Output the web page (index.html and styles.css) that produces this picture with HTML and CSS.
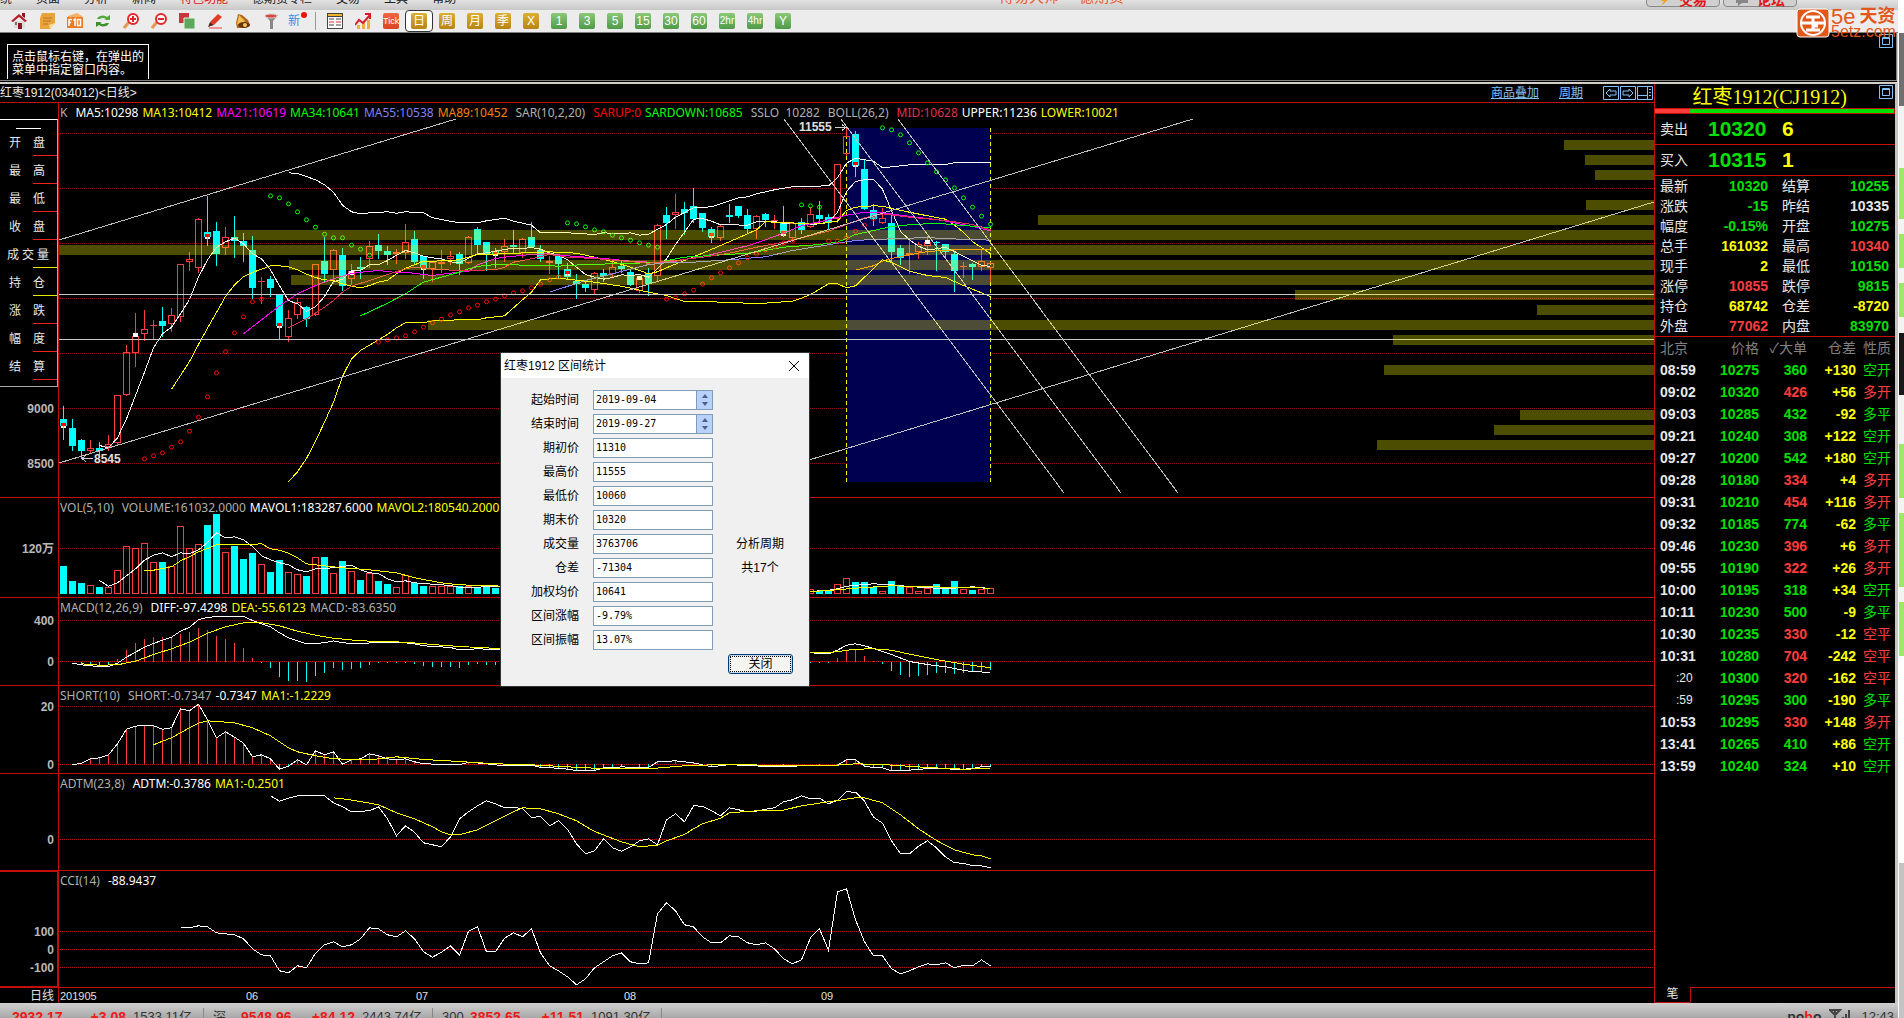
FILE: index.html
```html
<!DOCTYPE html>
<html lang="zh-CN">
<head>
<meta charset="utf-8">
<title>红枣1912 日线</title>
<link rel="stylesheet" href="styles.css">
</head>
<body>
<div class="app">
  <header class="menubar">
    <nav class="menu" aria-label="主菜单">
      <a href="#">统</a><a href="#">页面</a><a href="#">分析</a><a href="#">新闻</a><a href="#" class="hot">特色功能</a><a href="#">德期货专栏</a><a href="#">交易</a><a href="#">工具</a><a href="#">帮助</a>
    </nav>
    <div class="brand-line"><span>博易大师</span><span>德期货</span></div>
    <div class="menu-buttons">
      <button class="pill"><svg width="12" height="12" viewBox="0 0 12 12"><path d="M8 0L2 7h3L2 12 10 5H7L10 0z" fill="#f0a020"/></svg>交易</button>
      <button class="pill"><svg width="14" height="12" viewBox="0 0 14 12"><path d="M1 1h12v8H7l-4 3V9H1z" fill="#888"/></svg>论坛</button>
    </div>
  </header>

  <div class="toolbar" role="toolbar" aria-label="工具栏">
    <button class="tool" aria-label="主页"><svg viewBox="0 0 16 16"><path d="M3 8h11v7H3z" fill="#ddd"/><path d="M0 8L8 1l8 7-2 1-6-5-6 5z" fill="#b51e2c"/><path d="M11 0h3v5l-3-2zM7 10h4v6H7z" fill="#8e1522"/><path d="M4 9h2v3H4z" fill="#777"/></svg></button>
    <button class="tool" aria-label="公告"><svg viewBox="0 0 16 16"><path d="M3 0h13v10l-5 6H1V5z" fill="#e9a53a"/><path d="M4 5h9M4 8h8M4 11h5" stroke="#b9701c"/><path d="M16 10l-5 6-1-4z" fill="#f8dca0"/></svg></button>
    <button class="tool" aria-label="F10"><svg viewBox="0 0 16 16"><path d="M1 3l9-3 5 3v12H1z" fill="#f5b264"/><path d="M0 4h16v11H0z" fill="#ee7b22"/><path d="M2 13V6.500h3M2 9.500h2M6.500 7.500L8 6v7M10.500 6.500h3v6h-3z" fill="none" stroke="#fff" stroke-width="1.500"/></svg></button>
    <button class="tool" aria-label="刷新"><svg viewBox="0 0 16 16"><path d="M2 6a6 5 0 0 1 10-2l3-2v5H9l2-1a4 3 0 0 0-6 0z" fill="#55a83c"/><path d="M14 10a6 5 0 0 1-10 2l-3 2V9h6l-2 1a4 3 0 0 0 6 0z" fill="#3f8f2c"/></svg></button>
    <button class="tool" aria-label="放大"><svg viewBox="0 0 16 16"><path d="M6 9l-5 6" stroke="#e39a55" stroke-width="3"/><circle cx="10" cy="6" r="5" fill="#fff" stroke="#e3262a" stroke-width="2"/><path d="M7 6h6M10 3v6" stroke="#e3262a" stroke-width="2"/></svg></button>
    <button class="tool" aria-label="缩小"><svg viewBox="0 0 16 16"><path d="M6 9l-5 6" stroke="#e39a55" stroke-width="3"/><circle cx="10" cy="6" r="5" fill="#fff" stroke="#e3262a" stroke-width="2"/><path d="M7 6h6" stroke="#e3262a" stroke-width="2"/></svg></button>
    <button class="tool" aria-label="窗口"><svg viewBox="0 0 16 16"><path d="M0 0h10v10H0z" fill="#c8373c"/><path d="M5 5h11v11H5z" fill="#5fa75c" stroke="#e6f2e4"/></svg></button>
    <button class="tool" aria-label="画线"><svg viewBox="0 0 16 16"><path d="M3 9l8-8 4 3-8 8z" fill="#e23c28"/><path d="M3 9l4 3-6 2z" fill="#502820"/><path d="M2 15h13" stroke="#f04040"/></svg></button>
    <button class="tool" aria-label="预警"><svg viewBox="0 0 16 16"><path d="M3 1l4 1 6 5 2 5-5 3-8 0-1-5z" fill="#b46a1b"/><path d="M4 2l6 6-6 5-2-2z" fill="#efc053"/><ellipse cx="9" cy="12" rx="6" ry="3" fill="#6a3410"/><circle cx="10" cy="12" r="2" fill="#f0c860"/></svg></button>
    <button class="tool narrow" aria-label="筛选"><svg viewBox="0 0 16 16"><path d="M2 2h13l-5 6v8H7V8z" fill="#888"/><ellipse cx="8" cy="3" rx="6" ry="2" fill="#e04438" stroke="#ccc"/></svg></button>
    <button class="tool new-tag" aria-label="新"><span>新</span><i></i></button>
    <span class="divider"></span>
    <button class="tool" aria-label="报价"><svg viewBox="0 0 16 16"><path d="M0 0h16v16H0z" fill="#444"/><path d="M1 4h14v11H1z" fill="#fff"/><path d="M1 1h14v2H1z" fill="#f0b428"/><path d="M2 6h5M9 6h5M2 12h5M9 12h5" stroke="#444"/><path d="M2 9h5M9 9h5" stroke="#e02828"/></svg></button>
    <button class="tool" aria-label="走势"><svg viewBox="0 0 16 16"><path d="M2 12h3v4H2zM7 9h3v7H7zM12 7h3v9h-3z" fill="#f0b040"/><path d="M0 12l4-5 4 3 7-8M10 1h5v5" fill="none" stroke="#d81c28" stroke-width="2"/></svg></button>
    <button class="tool"><span class="chip tick">Tick</span></button>
    <button class="tool active"><span class="chip gold">日</span></button>
    <button class="tool"><span class="chip gold">周</span></button>
    <button class="tool"><span class="chip gold">月</span></button>
    <button class="tool"><span class="chip gold">季</span></button>
    <button class="tool"><span class="chip gold">X</span></button>
    <button class="tool"><span class="chip green">1</span></button>
    <button class="tool"><span class="chip green">3</span></button>
    <button class="tool"><span class="chip green">5</span></button>
    <button class="tool"><span class="chip green">15</span></button>
    <button class="tool"><span class="chip green">30</span></button>
    <button class="tool"><span class="chip green">60</span></button>
    <button class="tool"><span class="chip green small">2hr</span></button>
    <button class="tool"><span class="chip green small">4hr</span></button>
    <button class="tool"><span class="chip green">Y</span></button>
  </div>

  <div class="logo">
    <svg width="34" height="30" viewBox="0 0 34 30"><rect x="1" y="1" width="32" height="28" rx="3" fill="#e3571b" stroke="#fff"/><circle cx="17" cy="15" r="12" fill="none" stroke="#fff" stroke-width="2"/><path d="M10 9h14M6 15h22M17 9v13M17 18h5M10 22h14" stroke="#fff" stroke-width="3" fill="none"/></svg>
    <div class="logo-text"><span class="logo-name"><b>5e</b>天资</span><span class="logo-url">5etz.com</span></div>
  </div>

  <section class="hint-pane">
    <p class="hint">点击鼠标右键，在弹出的<br>菜单中指定窗口内容。</p>
    <button class="winbox" aria-label="最大化"><svg width="14" height="14"><path d="M.5.5h13v13H.5zM3.500 3.500h7v7h-7zM3 4.500h8" fill="none" stroke="#80c0ff"/></svg></button>
  </section>

  <main class="workspace">
    <section class="charts">
      <div class="chart-title">
        <h1>红枣1912(034012)&lt;日线&gt;</h1>
        <a href="#">商品叠加</a>
        <a href="#">周期</a>
        <div class="chart-nav">
          <button aria-label="向左"><svg width="16" height="14"><path d="M.5.5h15v13H.5zM3 7l4-4v2h6v4H7v2z" fill="none" stroke="#80c0ff"/></svg></button>
          <button aria-label="向右"><svg width="16" height="14"><path d="M.5.5h15v13H.5zM13 7L9 3v2H3v4h6v2z" fill="none" stroke="#80c0ff"/></svg></button>
          <button aria-label="面板"><svg width="16" height="14"><path d="M.5.5h15v13H.5zM10.500 1v12M1 9.500h9M12 3.500h2M12 6.500h2M12 9.500h2" fill="none" stroke="#80c0ff"/></svg></button>
        </div>
      </div>

      <div class="pane pane-main">
        <svg class="plot" id="k"></svg>
        <div class="legend"><span class="g wide">K</span><span class="w">MA5:10298</span><span class="y">MA13:10412</span><span class="m">MA21:10619</span><span class="gr">MA34:10641</span><span class="b">MA55:10538</span><span class="o wide">MA89:10452</span><span class="g wide">SAR(10,2,20)</span><span class="r">SARUP:0</span><span class="gr wide">SARDOWN:10685</span><span class="g wide">SSLO&nbsp; 10282</span><span class="g wide">BOLL(26,2)</span><span class="c">MID:10628</span><span class="w">UPPER:11236</span><span class="y">LOWER:10021</span></div>
        <ul class="fields">
          <li class="first"><i></i></li>
          <li><span>开</span><span>盘</span></li>
          <li><span>最</span><span>高</span></li>
          <li><span>最</span><span>低</span></li>
          <li><span>收</span><span>盘</span></li>
          <li class="yl three"><span>成</span><span>交</span><span>量</span></li>
          <li class="yl"><span>持</span><span>仓</span></li>
          <li><span>涨</span><span>跌</span></li>
          <li><span>幅</span><span>度</span></li>
          <li><span>结</span><span>算</span></li>
        </ul>
      </div>
      <div class="pane pane-vol"><svg class="plot" id="vol"></svg>
        <div class="legend"><span class="g wide">VOL(5,10)</span><span class="g">VOLUME:161032.0000</span><span class="w">MAVOL1:183287.6000</span><span class="y">MAVOL2:180540.2000</span></div></div>
      <div class="pane pane-macd"><svg class="plot" id="macd"></svg>
        <div class="legend"><span class="g wide">MACD(12,26,9)</span><span class="w">DIFF:-97.4298</span><span class="y">DEA:-55.6123</span><span class="g">MACD:-83.6350</span></div></div>
      <div class="pane pane-macd"><svg class="plot" id="short"></svg>
        <div class="legend"><span class="g wide">SHORT(10)</span><span class="g">SHORT:-0.7347</span><span class="w">-0.7347</span><span class="y">MA1:-1.2229</span></div></div>
      <div class="pane pane-adtm"><svg class="plot" id="adtm"></svg>
        <div class="legend"><span class="g wide">ADTM(23,8)</span><span class="w">ADTM:-0.3786</span><span class="y">MA1:-0.2501</span></div></div>
      <div class="pane pane-cci"><svg class="plot" id="cci"></svg><div class="axis-box"></div>
        <div class="legend"><span class="g wide">CCI(14)</span><span class="w">-88.9437</span></div></div>
      <div class="pane pane-time"><svg class="plot" id="time"></svg></div>
    </section>

    <aside class="quotes">
      <div class="q-title"><h2>红枣1912(CJ1912)</h2><button class="winbox" aria-label="最大化"><svg width="14" height="14"><path d="M.5.5h13v13H.5zM3.500 3.500h7v7h-7zM3 4.500h8" fill="none" stroke="#80c0ff"/></svg></button></div>
      <div class="ratio"><i></i></div>
      <div class="deal"><span>卖出</span><b>10320</b><em>6</em></div>
      <div class="deal"><span>买入</span><b>10315</b><em>1</em></div>
      <table class="stats">
        <tr><th>最新</th><td class="up">10320</td><th>结算</th><td class="up">10255</td></tr>
        <tr><th>涨跌</th><td class="up">-15</td><th>昨结</th><td class="wh">10335</td></tr>
        <tr><th>幅度</th><td class="up">-0.15%</td><th>开盘</th><td class="up">10275</td></tr>
        <tr><th>总手</th><td class="ye">161032</td><th>最高</th><td class="dn">10340</td></tr>
        <tr><th>现手</th><td class="ye">2</td><th>最低</th><td class="up">10150</td></tr>
        <tr><th>涨停</th><td class="dn">10855</td><th>跌停</th><td class="up">9815</td></tr>
        <tr><th>持仓</th><td class="ye">68742</td><th>仓差</th><td class="ye">-8720</td></tr>
        <tr><th>外盘</th><td class="dn">77062</td><th>内盘</th><td class="up">83970</td></tr>
      </table>
      <table class="tape">
        <thead><tr><th>北京</th><th>价格</th><th>✓大单</th><th>仓差</th><th>性质</th></tr></thead>
        <tbody>
        <tr><td>08:59</td><td>10275</td><td class="up">360</td><td>+130</td><td class="up">空开</td></tr>
        <tr><td>09:02</td><td>10320</td><td class="dn">426</td><td>+56</td><td class="dn">多开</td></tr>
        <tr><td>09:03</td><td>10285</td><td class="up">432</td><td>-92</td><td class="up">多平</td></tr>
        <tr><td>09:21</td><td>10240</td><td class="up">308</td><td>+122</td><td class="up">空开</td></tr>
        <tr><td>09:27</td><td>10200</td><td class="up">542</td><td>+180</td><td class="up">空开</td></tr>
        <tr><td>09:28</td><td>10180</td><td class="dn">334</td><td>+4</td><td class="dn">多开</td></tr>
        <tr><td>09:31</td><td>10210</td><td class="dn">454</td><td>+116</td><td class="dn">多开</td></tr>
        <tr><td>09:32</td><td>10185</td><td class="up">774</td><td>-62</td><td class="up">多平</td></tr>
        <tr><td>09:46</td><td>10230</td><td class="dn">396</td><td>+6</td><td class="dn">多开</td></tr>
        <tr><td>09:55</td><td>10190</td><td class="dn">322</td><td>+26</td><td class="dn">多开</td></tr>
        <tr><td>10:00</td><td>10195</td><td class="up">318</td><td>+34</td><td class="up">空开</td></tr>
        <tr><td>10:11</td><td>10230</td><td class="up">500</td><td>-9</td><td class="up">多平</td></tr>
        <tr><td>10:30</td><td>10235</td><td class="dn">330</td><td>-12</td><td class="dn">空平</td></tr>
        <tr><td>10:31</td><td>10280</td><td class="dn">704</td><td>-242</td><td class="dn">空平</td></tr>
        <tr><td class="sec">:20</td><td>10300</td><td class="dn">320</td><td>-162</td><td class="dn">空平</td></tr>
        <tr><td class="sec">:59</td><td>10295</td><td class="up">300</td><td>-190</td><td class="up">多平</td></tr>
        <tr><td>10:53</td><td>10295</td><td class="dn">330</td><td>+148</td><td class="dn">多开</td></tr>
        <tr><td>13:41</td><td>10265</td><td class="up">410</td><td>+86</td><td class="up">空开</td></tr>
        <tr><td>13:59</td><td>10240</td><td class="up">324</td><td>+10</td><td class="up">空开</td></tr>
        </tbody>
      </table>
      <div class="tabs"><button>笔</button><span></span></div>
    </aside>
  </main>

  <footer class="status">
    <span class="index"><b>2932.17</b><b>+3.08</b></span><span class="amt">1533.11亿</span>
    <span class="nm">深</span><span class="index"><b>9548.96</b><b>+84.12</b></span><span class="amt">2443.74亿</span>
    <span class="nm">300</span><span class="index"><b>3852.65</b><b>+11.51</b></span><span class="amt">1091.30亿</span>
    <span class="pobo">po<i>b</i>o</span>
    <svg width="22" height="14" viewBox="0 0 22 14"><path d="M1 1h10L6 6zM6 1v13M14 14V8M17 14V5M20 14V1" fill="none" stroke="#444" stroke-width="2"/></svg>
    <time>12:43</time>
  </footer>

  <form class="dialog" role="dialog" aria-labelledby="dlg-title">
    <div class="dlg-head"><h2 id="dlg-title">红枣1912 区间统计</h2><button type="button" aria-label="关闭窗口"><svg width="12" height="12"><path d="M1 1l10 10M11 1L1 11" stroke="#000" fill="none"/></svg></button></div>
    <div class="dlg-body">
      <div class="row"><label for="f1">起始时间</label><div class="spin"><input id="f1" value="2019-09-04"><span><button type="button" aria-label="增加"></button><button type="button" class="down" aria-label="减少"></button></span></div></div>
      <div class="row"><label for="f2">结束时间</label><div class="spin"><input id="f2" value="2019-09-27"><span><button type="button" aria-label="增加"></button><button type="button" class="down" aria-label="减少"></button></span></div></div>
      <div class="row"><label for="f3">期初价</label><input id="f3" value="11310"></div>
      <div class="row"><label for="f4">最高价</label><input id="f4" value="11555"></div>
      <div class="row"><label for="f5">最低价</label><input id="f5" value="10060"></div>
      <div class="row"><label for="f6">期末价</label><input id="f6" value="10320"></div>
      <div class="row"><label for="f7">成交量</label><input id="f7" value="3763706"><span class="side">分析周期</span></div>
      <div class="row"><label for="f8">仓差</label><input id="f8" value="-71304"><span class="side">共17个</span></div>
      <div class="row"><label for="f9">加权均价</label><input id="f9" value="10641"></div>
      <div class="row"><label for="f10">区间涨幅</label><input id="f10" value="-9.79%"></div>
      <div class="row"><label for="f11">区间振幅</label><input id="f11" value="13.07%"></div>
      <button type="button" class="ok"><span>关闭</span></button>
    </div>
  </form>
</div>
<div class="edge"></div>
<script src="chart.js"></script>
</body>
</html>
```
FILE: styles.css
```css
* { box-sizing: border-box; }
body {
  margin: 0;
  display: flex;
  min-height: 100vh;
  background: #000;
  color: #e8e8e8;
  font: 12px/16px "Liberation Sans", "Noto Sans CJK SC", sans-serif;
  overflow: hidden;
}
h1, h2, p, ul { margin: 0; padding: 0; font-weight: normal; list-style: none; }
i, em { font-style: normal; }
button { margin: 0; padding: 0; border: 0; background: none; font: inherit; color: inherit; }
svg { display: block; }
.app { position: relative; flex: 1; min-width: 0; display: flex; flex-direction: column; border-right: 1px solid #fff; }

/* menu */
.menubar { display: flex; height: 10px; overflow: hidden; background: linear-gradient(#e2e2e2, #c8c8c8); }
.menu { display: flex; gap: 24px; width: 999px; margin-top: -8px; }
.menu a { color: #222; text-decoration: none; line-height: 14px; white-space: nowrap; height: 14px; }
.menu a.hot { color: #e81010; }
.brand-line { display: flex; gap: 20px; flex: 1; margin-top: -12px; color: #f05a28; font-size: 15px; line-height: 18px; }
.menu-buttons { display: flex; gap: 3px; margin-right: 101px; }
.pill {
  display: flex; align-items: center; justify-content: center; gap: 8px;
  width: 74px; height: 24px; margin-top: -17px; padding-top: 9px;
  border: 1px solid #888; border-radius: 4px; background: #d0d0d0;
  color: #e01818; font-weight: bold; font-size: 14px;
}

/* toolbar */
.toolbar { display: flex; align-items: center; height: 23px; padding-left: 5px; background: #ececec; border-bottom: 1px solid #808080; }
.tool { width: 28px; height: 22px; display: grid; place-items: center; }
.tool.narrow { width: 27px; }
.tool svg { width: 16px; height: 16px; }
.tool.active { background: #fff; border: 1px solid #333; border-radius: 4px; }
.divider { width: 1px; height: 18px; background: #999; margin: 0 5px 0 3px; }
.chip { width: 16px; height: 16px; border-radius: 2px; color: #fff; font-size: 12px; line-height: 16px; text-align: center; overflow: hidden; }
.chip.gold { background: linear-gradient(#dcb030, #b88414); }
.chip.green { background: linear-gradient(#8cc878, #4e9a48); }
.chip.tick { background: linear-gradient(#f06840, #dc4420); font-size: 9px; }
.chip.small { font-size: 10px; }
.new-tag { grid-auto-flow: column; color: #3c8ce0; }
.new-tag i { width: 6px; height: 6px; border-radius: 3px; background: #f01010; align-self: start; margin: 2px 0 0 -8px; }

.logo { position: absolute; top: 8px; right: 0; display: flex; color: #e3571b; }
.logo-text { display: flex; flex-direction: column; width: 68px; padding-left: 1px; white-space: nowrap; }
.logo-name { display: flex; gap: 4px; font-size: 18px; font-weight: bold; line-height: 17px; }
.logo-name b { font: 22px/17px "Liberation Sans", sans-serif; }
.logo-url { font-size: 16px; line-height: 13px; }

/* hint */
.hint-pane { display: flex; justify-content: space-between; align-items: flex-start; height: 51px; padding: 0 4px 0 7px; border-bottom: 2px solid #d4d0c8; border-right: 1px solid #d4d0c8; box-shadow: inset 0 -1px #000, inset -1px -2px #808080; }
.hint { margin-top: 11px; width: 142px; height: 35px; padding: 6px 4px 0; border: 1px solid #fff; border-bottom: 0; line-height: 13px; color: #fff; white-space: nowrap; overflow: hidden; }
.winbox { padding-top: 1px; }

/* workspace */
.workspace { display: flex; flex: 1; border-right: 3px solid #c8c4c0; }
.charts { flex: 1; min-width: 0; }
.chart-title { display: flex; align-items: center; height: 19px; padding-right: 1px; border-bottom: 1px solid #c01008; }
.chart-title h1 { flex: 1; font-size: 12px; white-space: nowrap; }
.chart-title a { color: #80c0ff; margin-right: 20px; }
.chart-nav { display: flex; gap: 1px; }

.pane { display: grid; grid-template-columns: 59px minmax(0, 1fr); border-bottom: 1px solid #c01008; }
.pane > * { grid-row: 1; }
.pane-main { height: 395px; }
.pane-vol { height: 100px; }
.pane-macd { height: 88px; }
.pane-adtm { height: 97px; }
.pane-cci { height: 117px; }
.pane-time { height: 15px; border-bottom: 0; }
.plot { grid-column: 1 / 3; width: 100%; height: 100%; shape-rendering: crispEdges; }
.plot text { font: 12px "Liberation Sans", "Noto Sans CJK SC", sans-serif; fill: #e0e0e0; }
.plot text.time { font-size: 11px; }
.plot text.axis { font-weight: bold; text-anchor: end; fill: #b8b8b8; }
.plot text.mark { font-weight: bold; }
.plot .line { fill: none; stroke-width: 1; }
.legend { grid-column: 2; display: flex; gap: 4px; height: 20px; padding-left: 1px; font: 12px/20px "Noto Sans", sans-serif; white-space: nowrap; overflow: hidden; }
.legend .wide { margin-right: 4px; }
.g { color: #b0b0b0; } .w { color: #fff; } .y { color: #ff0; } .m { color: #f0f; }
.gr { color: #0f0; } .b { color: #8080ff; } .o { color: #ff8000; } .r { color: #f00; } .c { color: #e03050; }
.axis-box { grid-column: 1; border: 1px solid #c01008; border-left: 0; border-right-width: 2px; }

.fields { grid-column: 1; align-self: start; width: 58px; margin-top: 16px; padding-bottom: 5px; border: 1px solid #fff; border-left: 0; border-color: #fff #aaa #aaa; background: #000; }
.fields li { position: relative; display: flex; justify-content: space-between; align-items: center; height: 28px; padding: 0 12px 0 9px; line-height: 28px; }
.fields li.three { padding: 0 8px 0 7px; }
.fields li.first { height: 9px; padding: 0 16px; }
.fields li.first i { flex: 1; height: 1px; background: #fff; margin-top: 8px; }
.fields li::after { content: ""; position: absolute; right: 0; bottom: 1px; width: 24px; height: 1px; background: #f02020; }
.fields li.yl::after { background: #e8e800; }
.fields li.first::after { content: none; }

/* quotes */
.quotes { width: 241px; display: flex; flex-direction: column; border-left: 1px solid #c01008; }
.q-title { display: flex; justify-content: flex-end; gap: 32px; height: 24px; padding-right: 2px; }
.q-title h2 { font: 20px/26px "Liberation Serif", "Noto Sans CJK SC", serif; color: #ff0; }
.q-title .winbox { align-self: flex-start; }
.ratio { height: 6px; border: 1px solid #c01008; border-left: 0; background: #00e000; }
.ratio i { display: block; width: 35px; height: 4px; background: #ff3c3c; }
.deal { display: flex; align-items: center; height: 31px; padding-left: 5px; border-bottom: 1px solid #c01008; font-size: 14px; }
.deal span { width: 48px; }
.deal b { width: 74px; font-size: 21px; color: #00e000; }
.deal em { font-size: 21px; font-weight: bold; color: #ff0; }
table { width: 100%; border-collapse: separate; border-spacing: 0; table-layout: fixed; font-size: 14px; line-height: 18px; }
th, td { padding: 0; white-space: nowrap; }
th { font-weight: normal; text-align: left; }
td { font-weight: bold; text-align: right; }
.up { color: #00e000; } .dn { color: #ff3c3c; } .ye { color: #ff0; } .wh { color: #e8e8e8; }
.stats { padding: 0 6px 0 5px; border-bottom: 1px solid #c01008; }
.stats tr { height: 20px; }
.stats th { width: 42px; }
.stats th:nth-child(3) { width: 54px; padding-left: 14px; }
.stats td:nth-child(2) { width: 66px; }
.tape { padding: 0 4px 0 5px; }
.tape tr { height: 22px; }
.tape thead th { color: #808080; text-align: right; }
.tape thead th:nth-child(1) { width: 38px; text-align: left; }
.tape th:nth-child(2) { width: 61px; }
.tape th:nth-child(3) { width: 48px; }
.tape th:nth-child(4) { width: 49px; }
.tape td:nth-child(1) { text-align: left; }
.tape td:nth-child(2) { color: #00e000; }
.tape td:nth-child(4) { color: #ff0; }
.tape td:nth-child(5) { font-weight: normal; }
.tape td.sec { font-weight: normal; font-size: 12px; padding-left: 16px; }
.tabs { display: flex; margin-top: auto; height: 16px; margin-left: -1px; }
.tabs button { width: 37px; border: 1px solid #c01008; border-top: 0; border-radius: 0 0 2px 2px; line-height: 15px; }
.tabs span { flex: 1; border-top: 1px solid #c01008; }

/* status bar */
.status { display: flex; height: 15px; padding: 5px 4px 0 12px; overflow: hidden; background: linear-gradient(#d0d0d0, #a8a8a8); color: #333; font-size: 13px; line-height: 18px; white-space: nowrap; }
.index { display: flex; justify-content: space-between; width: 121px; padding-right: 7px; color: #f01818; font-size: 14px; }
.amt { width: 71px; height: 16px; border-right: 1px solid #888; }
.nm { width: 37px; padding-left: 9px; }
.status svg { margin-top: 1px; }
.pobo { margin-left: auto; margin-right: 8px; font-size: 14px; font-weight: bold; }
.pobo i { color: #f01818; }
.status time { margin-left: 10px; }

/* dialog */
.dialog { position: absolute; left: 501px; top: 353px; width: 308px; background: #f0f0f0; color: #000; outline: 1px solid #333; }
.dlg-head { display: flex; justify-content: space-between; align-items: center; height: 25px; padding: 0 9px 0 3px; background: #fff; }
.dlg-head h2 { font-size: 12px; line-height: 16px; }
.dlg-body { display: flex; flex-direction: column; gap: 4px; padding: 12px 16px 12px 0; }
.row { display: flex; align-items: center; height: 20px; }
.row label { width: 78px; margin-right: 14px; text-align: right; }
.dialog input { width: 120px; height: 20px; padding: 0 2px 2px; border: 1px solid #7f9db9; background: #fff; color: #000; font: 10px "DejaVu Sans Mono", monospace; }
.spin { display: flex; width: 120px; height: 20px; border: 1px solid #7f9db9; }
.dialog .spin input { flex: 1; width: 0; height: 18px; border: 0; }
.spin span { width: 16px; border-left: 1px solid #7f9db9; background: #b8d0fc; display: flex; flex-direction: column; align-items: center; justify-content: center; gap: 4px; }
.spin button { width: 0; height: 4px; border: 3px solid transparent; border-top: 0; border-bottom: 4px solid #4d6185; }
.spin button.down { border-bottom: 0; border-top: 4px solid #4d6185; }
.side { flex: 1; text-align: center; padding-left: 14px; }
.ok { align-self: flex-end; width: 65px; height: 20px; border: 1px solid #003c74; border-radius: 3px; background: #f4f4f0; box-shadow: inset 0 0 0 1px #c4d8f4; padding: 1px; }
.ok span { display: block; height: 16px; border: 1px dotted #000; line-height: 14px; }

/* strip of the neighbouring window */
.edge {
  width: 5px;
  background: linear-gradient(#fff 0 33px, #707070 33px 106px, #f4f4f4 106px 168px, #9ee868 168px 219px, #f4f4f4 219px 234px, #9ee868 234px 268px, #f4f4f4 268px 283px, #9ee868 283px 317px, #f4f4f4 317px 333px, #181818 333px 395px, #f4f4f4 395px 444px, #9ee868 444px 498px, #f4f4f4 498px 513px, #9ee868 513px 587px, #f4f4f4 587px 602px, #9ee868 602px 656px, #fff 656px 863px, #c4c4c4 863px);
}
```
FILE: chart.js
```js
// Candles sit 9px apart. Vertical readings are kept in thirds of a pixel.
const STEP = 9, X0 = 63;
const NS = 'http://www.w3.org/2000/svg';
const CYAN = '#00ffff', RED = '#ff3c3c';

function add(parent, tag, attrs, text) {
  const node = document.createElementNS(NS, tag);
  for (const key in attrs) node.setAttribute(key, attrs[key]);
  if (text) node.textContent = text;
  parent.appendChild(node);
  return node;
}
const x = i => X0 + i * STEP;

// offset: distance in px from the top of the pane to reading 0
function pane(id, offset) {
  const svg = document.getElementById(id);
  const y = v => Math.round(offset + v / 3);
  add(svg, 'rect', { x: 58, y: 0, width: 1, height: '100%', fill: '#c01008' });
  return {
    svg, y,
    grid(v, label, color) {
      const row = Math.floor(offset + v / 3);
      add(svg, 'line', { x1: 60, x2: '100%', y1: row + .5, y2: row + .5, stroke: color || '#a00000', 'stroke-dasharray': '1 1' });
      if (label) add(svg, 'text', { x: 54, y: row + 5, class: 'axis' }, label);
    },
    line(color, points) {
      const pts = points.split(' ').map(p => p.split(',')).map(([i, v]) => x(+i) + .5 + ',' + (offset + v / 3 + .5).toFixed(1));
      add(svg, 'polyline', { points: pts.join(' '), class: 'line', stroke: color });
    },
    segment(x1, y1, x2, y2, color, dash) {
      const a = { x1, y1, x2, y2, stroke: color || '#c0c0c0' };
      if (dash) a['stroke-dasharray'] = dash;
      add(svg, 'line', a);
    },
    body(i, top, bottom, up) {
      const t = y(top), h = Math.max(y(bottom) - t, 1);
      if (up && h > 1) add(svg, 'rect', { x: x(i) - 2.5, y: t + .5, width: 6, height: h - 1, fill: '#000', 'fill-opacity': 0, stroke: RED });
      else add(svg, 'rect', { x: x(i) - 3, y: t, width: 7, height: h, fill: up ? RED : CYAN });
    },
    stick(i, from, to, color) {
      const a = y(Math.min(from, to)), b = y(Math.max(from, to));
      add(svg, 'rect', { x: x(i), y: a, width: 1, height: Math.max(b - a, 1), fill: color });
    }
  };
}

// high, low, body top, body bottom, r = rising / c = falling
const candles = `918 1020 957 978 c|957 1053 984 1038 c|1018 1075 1020 1053 c|1020 1062 1044 1053 r|1026 1065 1044 1054 c|1005 1052 1032 1042 r|885 1038 885 1029 r|735 885 757 884 r|639 800 708 758 r|630 722 688 702 r|660 717 675 677 r|621 711 663 678 c|624 695 645 672 r|492 665 492 650 r|456 513 478 486 r|354 520 357 503 r|287 438 396 411 c|366 498 393 462 c|381 465 412 444 r|348 474 411 423 c|399 486 423 438 c|408 596 450 563 c|531 612 544 547 r|528 590 538 563 c|585 717 585 678 c|630 725 655 710 r|595 658 606 644 r|618 681 621 657 c|492 644 492 644 r|412 550 483 522 c|447 551 451 509 r|444 573 465 558 c|492 556 513 536 r|471 536 501 506 c|423 503 438 476 r|402 476 435 453 c|438 494 453 465 c|447 491 457 461 r|372 476 427 458 r|393 494 417 486 c|468 536 468 503 c|482 545 485 506 r|450 518 486 493 r|453 494 468 476 r|456 525 462 492 c|408 488 412 488 r|381 460 387 434 c|426 512 426 463 c|443 503 452 462 c|417 486 437 455 r|390 458 436 441 c|414 474 418 458 r|366 440 411 440 c|436 485 450 477 c|468 523 482 488 r|466 535 466 492 c|489 538 507 530 c|522 596 543 551 c|545 575 552 564 c|515 585 520 569 r|508 545 520 527 c|483 530 502 521 r|483 518 498 507 c|508 557 516 555 c|528 580 535 574 r|504 587 520 553 c|373 545 376 529 r|321 417 345 369 c|282 387 337 346 r|306 404 327 339 c|264 370 318 356 c|339 396 339 384 c|381 428 387 410 c|375 422 379 413 r|312 368 345 350 c|318 354 318 348 c|328 398 345 387 c|345 416 349 386 r|339 380 342 360 c|346 386 360 363 r|318 410 366 400 c|366 425 370 413 r|353 402 366 389 c|321 382 343 380 r|303 370 345 357 c|342 389 351 370 c|192 368 192 358 r|85 168 109 163 r|93 230 102 197 c|180 327 207 327 c|312 378 330 357 c|324 368 354 368 r|340 486 370 455 c|435 494 444 473 c|420 521 458 465 r|426 478 433 455 r|408 464 427 439 r|423 513 427 430 c|432 473 432 456 c|456 575 462 513 c|486 533 498 502 r|489 539 492 501 c|450 513 484 502 r|486 545 490 505 r`
  .split('|').map(row => row.split(' ')).map(([h, l, t, b, k]) => ({ h: +h, l: +l, t: +t, b: +b, up: k === 'r' }));

const k = pane('k', -3);
[100, 265, 430, 595, 760].forEach(v => k.grid(v));
k.grid(925, '9000');
k.grid(1090, '8500');
add(k.svg, 'rect', { x: 847, y: 25, width: 144, height: 354, fill: '#000050' });
k.segment(846.5, 25, 846.5, 379, '#ff0', '4 3');
k.segment(990.5, 25, 990.5, 379, '#ff0', '4 3');
candles.forEach((c, i) => {
  const color = c.up ? RED : CYAN;
  k.stick(i, c.h, c.t, color);
  k.stick(i, c.b, c.l, color);
  k.body(i, c.t, c.b, c.up);
});
// pattern markers: red with a white foot, or white
[[0, 969], [16, 402], [24, 670], [40, 494], [48, 452], [56, 514], [72, 399], [80, 393], [88, 185]].forEach(([i, v]) => {
  add(k.svg, 'rect', { x: x(i) - 2, y: k.y(v), width: 5, height: 3, fill: '#ff0000' });
  add(k.svg, 'rect', { x: x(i) - 2, y: k.y(v) + 3, width: 2, height: 2, fill: '#fff' });
  add(k.svg, 'rect', { x: x(i) + 1, y: k.y(v) + 3, width: 2, height: 2, fill: '#fff' });
});
[[8, 700], [32, 513], [64, 529], [96, 420]].forEach(([i, v]) => {
  add(k.svg, 'rect', { x: x(i) - 2, y: k.y(v), width: 5, height: 4, fill: '#fff' });
});

k.line('#f0f0f0', '4,1035 5,1042 6,1012 7,955 8,885 9,815 10,742 11,700 12,680 13,640 14,597 15,530 16,478 17,440 18,424 19,413 20,430 21,460 22,475 23,508 24,556 25,600 26,610 27,632 28,619 29,588 30,543 31,537 32,510 33,510 34,493 35,493 36,480 37,464 38,450 39,457 40,467 41,472 42,475 43,484 44,487 45,473 46,460 47,457 48,452 49,447 50,443 51,444 52,441 53,446 54,457 55,465 56,478 57,500 58,522 59,530 60,536 61,531 62,523 63,525 64,522 65,530 66,505 67,475 68,432 69,395 70,356 71,354 72,362 73,373 74,373 76,374 77,364 78,362 79,363 80,369 81,367 82,370 83,372 84,370 85,366 86,335 87,273 88,243 89,238 90,236 91,266 92,330 93,393 94,418 95,437 96,448 97,445 98,440 99,453 100,467 101,481 102,494 103,498');
k.line('#ff0', '12,866 13,825 14,783 15,732 16,683 17,636 18,588 19,553 20,529 21,516 22,506 23,496 24,496 25,499 26,508 27,521 28,531 29,538 30,540 31,550 32,557 33,562 34,555 35,545 36,539 37,520 38,503 39,493 40,482 41,483 42,480 43,481 44,477 45,470 46,462 49,460 52,456 54,454 57,458 59,470 61,483 63,500 65,520 66,514 67,502 69,480 71,458 73,435 75,412 77,388 78,364 80,366 82,369 84,369 86,362 87,330 88,320 90,316 91,317 92,324 94,335 96,346 98,356 99,374 100,395 101,424 102,441 103,460');
k.line('#f0f', '20,700 22,658 24,616 26,580 28,555 30,535 32,519 33,515 35,510 37,516 38,515 40,522 41,525 43,518 45,512 46,493 48,474 49,470 52,462 54,460 56,466 60,474 63,482 66,486 68,482 72,462 76,436 78,418 80,398 82,376 85,358 87,344 89,335 91,337 93,344 95,351 97,357 99,367 101,378 103,391');
k.line('#0f0', '33,646 34,634 36,608 38,580 39,562 40,545 42,530 44,515 45,505 46,498 47,494 48,493 53,494 55,497 58,492 61,490 66,486 69,470 72,465 76,458 80,440 84,432 86,425 88,402 90,390 92,378 94,373 97,368 99,373 101,377 103,382');
k.line('#8080ff', '54,575 58,540 61,520 65,492 67,487 70,485 74,478 78,469 81,450 84,437 86,428 88,420 90,417 93,414 96,411 98,415 102,417 103,420');
k.line('#ff8000', '88,509 89,502 90,496 91,482 92,474 94,463 96,453 99,448 103,446');
k.line('#e03050', '25,682 27,655 29,620 30,600 31,575 32,557 34,540 36,522 38,505 39,500 41,506 44,510 48,508 49,500 50,485 52,475 54,462 56,470 59,474 65,488 68,480 71,470 74,458 77,440 80,425 83,405 85,392 87,372 89,352 91,340 94,350 98,360 101,372 103,388');
k.line('#fff', '25,217 26,219 27,228 28,238 29,253 30,275 31,314 32,334 33,340 34,337 36,334 37,338 38,334 40,337 41,352 43,362 44,367 46,367 47,361 48,357 49,353 50,362 52,374 53,397 56,397 59,402 60,397 62,400 63,397 64,404 65,401 67,372 68,350 70,322 72,319 75,292 76,289 77,280 79,268 81,259 85,256 86,232 87,188 88,173 90,182 91,202 94,193 98,192 99,187 103,187');
k.line('#ff0', '25,1144 26,1114 27,1074 28,1022 29,965 30,905 31,828 32,775 33,750 35,718 36,702 37,682 38,667 40,667 41,661 44,658 46,658 47,652 49,646 50,622 51,598 52,575 53,538 55,533 59,545 62,557 65,575 67,585 69,603 74,605 77,610 81,602 82,593 83,582 84,566 85,550 86,550 87,562 88,556 89,530 91,478 92,486 94,512 96,525 98,531 100,555 103,588');

function dots(color, start, values) {
  values.split(' ').forEach((v, n) => add(k.svg, 'ellipse', {
    cx: x(start + n) + .5, cy: v / 3 - 2.5, rx: 2, ry: 2, fill: 'none', stroke: color, 'shape-rendering': 'auto'
  }));
}
dots('#f00', 9, '1075 1066 1057 1040 1024 992 950 889 817 754 697 649 604 596');
dots('#f00', 35, '725 718 712 706 694 680 667 656 643 634 622 614 604 596 586 577 571 562 551 538 530');
dots('#f00', 67, '596 592 580 569 551 532 517 502 487 472 461 448 439 427 422');
dots('#f00', 85, '422 422 412 392 374 354');
dots('#0f0', 23, '286 292 310 334 358 380 401 412 412 434 446 464');
dots('#0f0', 56, '367 370 379 388 394 404 412 419 427 434 440');
dots('#0f0', 82, '313 316 320');
dots('#0f0', 91, '82 88 103 127 157 187 214 238 262 292 320 347 371');

// trend and support lines
k.segment(59, 191.5, '100%', 191.5, '#c8c8c8');
k.segment(59, 236.5, '100%', 236.5, '#c8c8c8');
k.segment(59, 137, 456, 16);
k.segment(59, 360, 1193, 16);
k.segment(809, 357, 1654, 99);
k.segment(784, 16, 1064, 390);
k.segment(841, 16, 1121, 390);
k.segment(898, 16, 1178, 390);
add(k.svg, 'path', { d: 'M835 24.500h10M842 21.500l4 3-4 3M93 355.500H82M86 352.500l-4 3 4 3', fill: 'none', stroke: '#d0d0d0' });
add(k.svg, 'text', { x: 799, y: 28, class: 'mark' }, '11555');
add(k.svg, 'text', { x: 94, y: 360, class: 'mark' }, '8545');

// volume by price, growing from the right edge: top, length
const profile = add(k.svg, 'svg', { x: '100%', overflow: 'visible' });
[[140, 90], [155, 69], [170, 59], [200, 68], [215, 616], [230, 1420], [245, 1595], [260, 1365], [275, 1363], [290, 359], [305, 117], [320, 1226], [335, 261], [365, 270], [410, 134], [425, 160], [440, 277]].forEach(([top, len]) =>
  add(profile, 'rect', { x: -len, y: top - 103, width: len, height: 10, fill: '#ffff00', 'fill-opacity': .3 }));

const vol = pane('vol', -8);
vol.grid(176, '120万');
`228 273 279 286 291 292 241 169 175 160 217 216 229 109 175 163 105 72 187 168 207 189 223 246 210 247 253 258 202 201 250 213 244 270 250 273 282 292 256 279 288 287 287 289 288 287 290 286 294 290 288 290 286 290 294 290 288 290 292 290 296 294 296 290 292 290 270 276 282 286 280 290 292 294 290 296 296 296 298 300 298 298 300 298 303 303 283 265 276 276 290 302 273 286 290 302 295 282 296 273 298 301 298 294`
  .split(' ').forEach((v, i) => vol.body(i, +v, 311, candles[i].up));
vol.line('#f0f0f0', '4,270 5,287 6,277 7,256 8,235 9,209 10,194 11,187 12,199 13,187 14,190 15,178 16,156 17,127 18,142 19,139 20,148 21,168 22,196 23,208 24,217 25,223 26,238 27,244 28,235 30,232 32,224 33,238 34,247 35,249 36,265 37,274 38,271 39,277 41,281 43,285 44,290 49,289 83,303 85,299 86,295 87,287 89,282 90,280 92,283 94,288 98,295 101,289 103,294');
vol.line('#ff0', '9,241 10,239 12,229 13,211 14,199 15,184 16,174 17,163 20,163 22,160 23,175 24,179 25,188 26,202 27,220 29,226 31,232 34,238 37,247 39,262 42,277 44,283 49,287 83,303 85,300 88,293 92,286 95,288 103,293');

const macd = pane('macd', -108);
macd.grid(391, '400');
macd.grid(515, '0', '#c01008');
const bars = '2,524 3,525 4,524 5,523 6,507 7,480 8,459 9,447 10,441 11,441 12,443 13,432 14,426 15,414 16,420 17,438 18,447 19,459 20,474 21,504 22,518 23,533 24,560 25,572 26,572 27,575 28,557 29,548 30,533 31,540 32,537 33,533 34,525 35,518 36,518 37,518 38,516 39,521 40,527 41,530 42,530 43,530 44,533 45,524 46,521 47,525 48,524 83,518 84,518 85,518 86,504 87,481 88,480 89,498 90,514 91,522 92,543 93,555 94,561 95,557 96,555 97,549 98,549 99,552 100,550 101,547 102,542 103,540';
bars.split(' ').forEach(p => {
  const [i, v] = p.split(',').map(Number);
  macd.stick(i, 515, v, v < 515 ? RED : CYAN);
});
macd.line('#fff', '1,518 2,523 3,526 4,528 5,528 6,518 7,500 8,485 9,470 10,459 11,449 12,440 13,422 14,410 15,388 16,380 17,379 20,377 21,390 22,400 23,409 24,427 25,442 26,451 27,460 29,457 30,451 31,457 33,460 35,455 38,457 39,460 40,466 43,471 44,478 46,475 49,478 83,487 85,490 86,479 87,464 88,460 89,466 90,474 92,492 94,513 96,522 98,529 100,539 101,544 103,545');
macd.line('#ff0', '2,520 4,524 6,523 8,512 10,492 12,475 14,455 16,428 18,409 20,397 22,397 24,406 26,422 28,434 30,443 33,451 38,455 41,462 44,468 49,475 83,485 85,487 88,476 90,475 92,479 94,491 97,507 100,521 103,532');

const short = pane('short', -196);
short.grid(650, '20');
short.grid(823, '0', '#c01008');
const shortLine = '1,823 2,818 3,805 4,802 5,793 6,760 7,716 8,707 9,704 10,706 11,716 12,712 13,655 14,661 15,641 16,688 17,742 18,724 19,740 20,758 21,799 22,793 23,805 24,836 25,827 26,808 27,823 28,781 29,793 30,784 31,821 32,808 33,805 34,790 35,796 36,805 37,808 38,805 39,814 40,820 44,823 45,815 47,820 49,826 52,824 53,831 54,832 55,833 56,836 57,840 58,841 59,840 60,832 61,832 62,829 64,832 65,831 66,814 68,811 70,817 72,829 74,822 76,826 80,828 84,824 86,824 87,808 88,808 89,827 90,831 91,832 92,841 93,841 94,839 95,836 96,835 97,833 98,833 99,838 100,836 101,834 102,829 103,829';
shortLine.split(' ').forEach(p => {
  const [i, v] = p.split(',').map(Number);
  short.stick(i, 823, v, v < 823 ? RED : CYAN);
});
short.line('#fff', shortLine);
short.line('#ff0', '10,763 11,752 12,742 13,727 14,712 15,698 16,691 19,697 21,712 23,736 25,772 26,784 28,796 30,805 34,808 37,799 40,807 44,813 48,820 52,823 58,832 61,835 65,835 69,826 74,821 80,826 85,826 88,820 91,822 96,831 100,836 103,834');

const adtm = pane('adtm', -14);
adtm.grid(239, '0', '#c01008');
adtm.line('#fff', '23,106 24,122 25,113 26,106 29,106 30,127 31,139 32,154 33,152 34,151 35,139 36,175 37,226 38,196 39,215 40,247 41,253 42,259 43,229 44,175 45,154 46,136 47,121 48,130 49,142 50,140 51,145 52,172 53,167 54,196 55,181 56,206 57,250 58,280 59,271 60,235 61,262 62,272 63,259 64,241 65,235 66,253 67,178 68,160 69,184 70,136 71,137 72,151 73,166 74,142 75,148 76,154 77,152 78,146 79,142 80,124 81,118 82,106 83,115 84,113 85,130 86,119 87,94 88,95 89,122 90,170 91,188 92,241 93,280 94,280 95,257 96,241 97,262 98,289 99,307 100,308 101,316 102,316 103,322');
adtm.line('#ff0', '30,112 31,115 33,123 35,133 37,157 39,175 41,199 42,214 43,223 44,223 46,208 48,181 50,154 51,142 53,145 55,160 57,181 59,213 62,244 64,259 66,254 67,241 69,222 70,205 71,190 73,173 74,157 77,151 80,149 82,136 85,124 88,112 89,112 91,127 93,163 95,205 97,240 99,268 101,283 102,286 103,295');

const cci = pane('cci', -111);
cci.grid(515, '100', '#c01008');
cci.grid(569, '0', '#c01008');
cci.grid(623, '-100', '#c01008');
cci.line('#fff', '13,502 14,502 15,496 16,499 17,517 18,520 19,523 20,535 21,565 22,583 23,586 24,631 25,637 26,616 27,622 28,578 29,553 30,544 31,559 32,553 33,535 34,502 35,505 36,523 37,529 38,511 39,535 40,574 41,590 42,575 43,556 44,584 45,512 46,499 47,574 48,574 49,533 50,517 51,529 52,505 53,577 54,616 55,631 56,649 57,673 58,655 59,622 60,604 61,586 62,577 63,604 64,610 65,607 66,460 67,427 68,451 69,493 70,499 71,529 72,547 73,547 74,526 75,529 76,547 77,553 78,547 79,565 80,595 81,610 82,598 83,532 84,505 85,569 86,394 87,385 88,478 89,544 90,586 91,586 92,625 93,640 94,631 95,619 96,610 97,613 98,607 99,622 100,614 101,616 102,598 103,616');

const time = pane('time', 0);
[[30, '日线'], [60, '201905'], [246, '06'], [416, '07'], [624, '08'], [821, '09']].forEach(([px, label], n) =>
  add(time.svg, 'text', { x: px, y: 12, class: n ? 'time' : '' }, label));
```
